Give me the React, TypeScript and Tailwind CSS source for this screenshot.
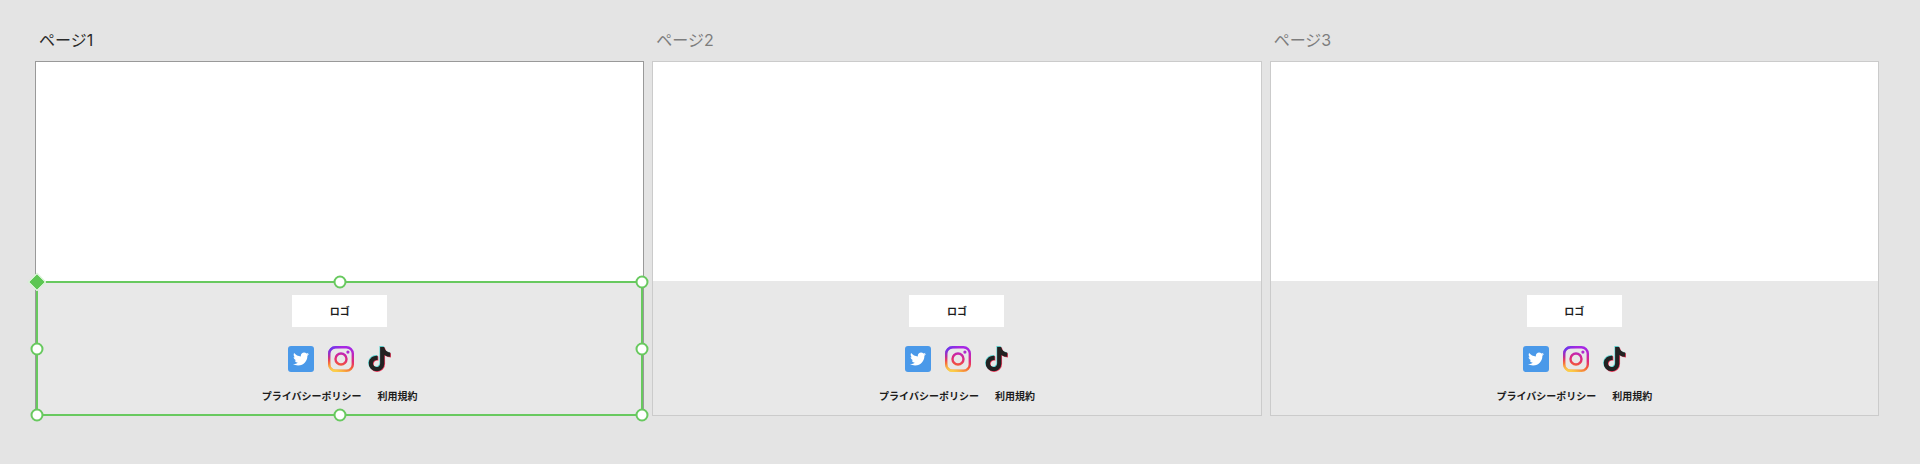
import { FaTiktok, FaTwitter } from "react-icons/fa6";

const pages = [
  { id: 1, name: "ページ1", selected: true },
  { id: 2, name: "ページ2", selected: false },
  { id: 3, name: "ページ3", selected: false },
];

const handles = [
  "left-1/2 top-0",
  "left-full top-0",
  "left-0 top-1/2",
  "left-full top-1/2",
  "left-0 top-full",
  "left-1/2 top-full",
  "left-full top-full",
];

const TwitterIcon = () => (
  <span className="flex size-[26px] items-center justify-center rounded-[3px] bg-[#4a99e9]">
    <FaTwitter className="size-4 text-white" />
  </span>
);

const InstagramIcon = ({ id }: { id: string }) => (
  <svg viewBox="0 0 26 26" className="size-[26px]" fill="none">
    <defs>
      <linearGradient id={`${id}-base`} x1="10" y1="26" x2="15" y2="0" gradientUnits="userSpaceOnUse">
        <stop offset="0" stopColor="#f9b944" />
        <stop offset="0.25" stopColor="#f45b35" />
        <stop offset="0.5" stopColor="#df2a78" />
        <stop offset="0.8" stopColor="#b824c8" />
        <stop offset="1" stopColor="#a428e8" />
      </linearGradient>
      <radialGradient id={`${id}-violet`} cx="1" cy="1" r="13" gradientUnits="userSpaceOnUse">
        <stop offset="0" stopColor="#5b3cf5" />
        <stop offset="1" stopColor="#5b3cf5" stopOpacity="0" />
      </radialGradient>
      <radialGradient id={`${id}-yellow`} cx="6" cy="26" r="13" gradientUnits="userSpaceOnUse">
        <stop offset="0" stopColor="#fcd24a" />
        <stop offset="1" stopColor="#fcd24a" stopOpacity="0" />
      </radialGradient>
    </defs>
    {["base", "violet", "yellow"].map((layer) => (
      <rect
        key={layer}
        x="1.2"
        y="1.2"
        width="23.6"
        height="23.6"
        rx="6.4"
        stroke={`url(#${id}-${layer})`}
        strokeWidth="2.4"
      />
    ))}
    <circle cx="13" cy="13" r="5.5" stroke={`url(#${id}-base)`} strokeWidth="2.4" />
    <circle cx="19.9" cy="6.1" r="1.6" fill="#b02ad0" />
  </svg>
);

const TiktokIcon = () => (
  <svg viewBox="0 0 23 26" className="h-[26px] w-[23px]">
    <FaTiktok x="-1.5" y="0" size="24.6" color="#5fd5d2" />
    <FaTiktok x="-0.1" y="1.4" size="24.6" color="#ec3f60" />
    <FaTiktok x="-0.8" y="0.7" size="24.6" color="#222" />
  </svg>
);

const Selection = () => (
  <div className="pointer-events-none absolute inset-x-0 -bottom-px top-0">
    <div className="absolute inset-0 border-2 border-[#68c95f]" />
    <div className="absolute inset-px">
      <span className="absolute left-0 top-0 size-[13px] -translate-x-1/2 -translate-y-1/2 rotate-45 border border-white bg-[#5cc652]" />
      {handles.map((position) => (
        <span
          key={position}
          className={`absolute size-[13px] -translate-x-1/2 -translate-y-1/2 rounded-full border-2 border-[#68c95f] bg-white ${position}`}
        />
      ))}
    </div>
  </div>
);

const Footer = ({ id, selected }: { id: string; selected: boolean }) => (
  <footer className="relative flex flex-col items-center bg-[#e8e8e8] pb-[11px] pt-[14px] text-[10px] font-bold leading-4 text-[#1c1c1c]">
    {/* ロゴ */}
    <div className="flex h-8 w-[95px] items-center justify-center bg-white">ロゴ</div>

    {/* SNSリンク */}
    <div className="mt-[19px] flex gap-[14px]">
      <a href="#twitter" aria-label="Twitter">
        <TwitterIcon />
      </a>
      <a href="#instagram" aria-label="Instagram">
        <InstagramIcon id={id} />
      </a>
      <a href="#tiktok" aria-label="TikTok">
        <TiktokIcon />
      </a>
    </div>

    <div className="mt-4 flex gap-4 whitespace-nowrap">
      <a href="#privacy">プライバシーポリシー</a>
      <a href="#terms">利用規約</a>
    </div>

    {selected && <Selection />}
  </footer>
);

const App = () => {
  return (
    <main className="grid min-h-screen grid-cols-3 content-start gap-2 bg-[#e4e4e4] pl-[35px] pr-[41px] pt-7 font-['Inter','Noto_Sans_CJK_JP',sans-serif]">
      {pages.map(({ id, name, selected }) => (
        <section key={id}>
          <h2
            className={`mb-[9px] pl-1 text-base leading-6 ${selected ? "text-[#2a2a2a]" : "text-[#7d7d7d]"}`}
          >
            {name}
          </h2>
          <div className={`border bg-white ${selected ? "border-[#999999]" : "border-[#cbcbcb]"}`}>
            <div className="h-[219px]" />
            <Footer id={`instagram-${id}`} selected={selected} />
          </div>
        </section>
      ))}
    </main>
  );
};

export default App;
